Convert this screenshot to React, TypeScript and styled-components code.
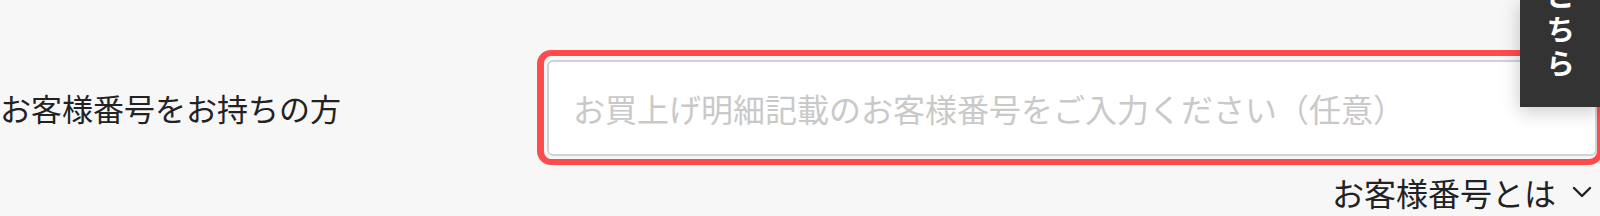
import React from 'react';
import styled, { createGlobalStyle } from 'styled-components';

const GlobalStyle = createGlobalStyle`
  html, body {
    margin: 0;
    padding: 0;
    background: #f7f7f7;
  }
  body {
    font-family: "Noto Sans CJK JP", "Noto Sans", sans-serif;
    color: #222;
  }
`;

const Page = styled.div`
  position: relative;
  height: 216px;
  overflow: hidden;
  background: #f7f7f7;
`;

const Section = styled.section`
  padding-top: 50px;
`;

const Row = styled.div`
  display: grid;
  grid-template-columns: 537px 1fr;
  align-items: center;
`;

const Label = styled.label`
  font-size: 31px;
  line-height: 1.4;
  color: #222;
  white-space: nowrap;
`;

/* red highlight drawn round the field */
const Highlight = styled.div`
  border: 6px solid #ff4b4b;
  border-left-width: 7px;
  border-radius: 14px;
  padding: 4px 0 3px 3px;
  margin-right: -3px;
`;

const Input = styled.input`
  display: block;
  box-sizing: border-box;
  width: 100%;
  height: 96px;
  border: 2px solid #cfd3d8;
  border-radius: 6px;
  background: #fff;
  padding: 0 24px;
  font-family: inherit;
  font-size: 32px;
  color: #222;
  outline: none;

  &::placeholder {
    color: #c9c9c9;
  }
`;

const HelpRow = styled.div`
  display: flex;
  justify-content: flex-end;
  align-items: center;
  gap: 16px;
  margin-top: 5px;
  padding-right: 8px;
`;

const HelpText = styled.span`
  font-size: 32px;
  line-height: 1.4;
  color: #222;
`;

const Chevron = styled.svg`
  width: 20px;
  height: 12px;
  flex: none;
`;

const SideTab = styled.a`
  position: absolute;
  top: 0;
  right: 0;
  width: 80px;
  height: 107px;
  box-sizing: border-box;
  padding-bottom: 24px;
  background: #333;
  box-shadow: 0 4px 18px rgba(0, 0, 0, 0.22);
  display: flex;
  flex-direction: column;
  justify-content: flex-end;
  align-items: center;
  overflow: hidden;
  text-decoration: none;
`;

const TabText = styled.span`
  flex: none;
  writing-mode: vertical-rl;
  white-space: nowrap;
  color: #fff;
  font-size: 29px;
  font-weight: 700;
  letter-spacing: 5px;
  line-height: 1;
`;

export default function App() {
  return (
    <Page>
      <GlobalStyle />
      <Section>
        <Row>
          <Label htmlFor="customer-no">お客様番号をお持ちの方</Label>
          <Highlight>
            <Input
              id="customer-no"
              type="text"
              placeholder="お買上げ明細記載のお客様番号をご入力ください（任意）"
            />
          </Highlight>
        </Row>
        <HelpRow>
          <HelpText>お客様番号とは</HelpText>
          <Chevron viewBox="0 0 20 12" fill="none">
            <path d="M2 2l8 8 8-8" stroke="#222" strokeWidth="2.4" strokeLinecap="round" strokeLinejoin="round" />
          </Chevron>
        </HelpRow>
      </Section>
      <SideTab href="#">
        <TabText>お問い合わせはこちら</TabText>
      </SideTab>
    </Page>
  );
}
